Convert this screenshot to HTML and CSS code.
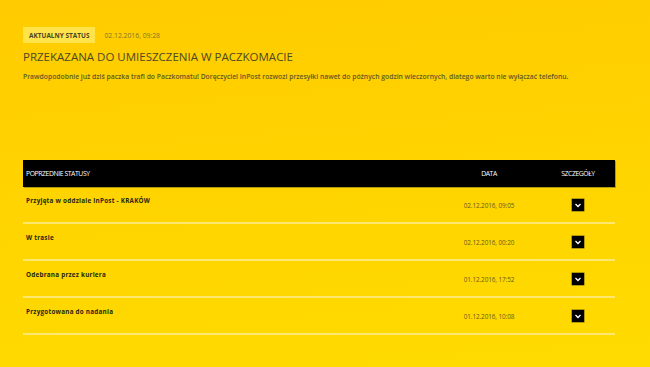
FILE: index.html
```html
<!DOCTYPE html>
<html lang="pl">
<head>
<meta charset="utf-8">
<link rel="stylesheet" href="styles.css">
</head>
<body>
<div class="page">
  <section class="current">
    <div class="status-line">
      <span class="badge">AKTUALNY STATUS</span>
      <span class="current-date">02.12.2016, 09:28</span>
    </div>
    <h1 class="title">PRZEKAZANA DO UMIESZCZENIA W PACZKOMACIE</h1>
    <p class="desc">Prawdopodobnie już dziś paczka trafi do Paczkomatu! Doręczyciel InPost rozwozi przesyłki nawet do późnych godzin wieczornych, dlatego warto nie wyłączać telefonu.</p>
  </section>

  <section class="history">
    <div class="head">
      <div class="col-name">POPRZEDNIE STATUSY</div>
      <div class="col-date">DATA</div>
      <div class="col-more">SZCZEGÓŁY</div>
    </div>
    <div class="row">
      <div class="col-name name">Przyjęta w oddziale InPost - KRAKÓW</div>
      <div class="col-date date">02.12.2016, 09:05</div>
      <div class="col-more"><span class="toggle"><svg viewBox="0 0 12 12" width="12" height="12"><path d="M3.5 5 L6 7.5 L8.5 5" fill="none" stroke="#fff" stroke-width="1.3"/></svg></span></div>
    </div>
    <div class="row">
      <div class="col-name name">W trasie</div>
      <div class="col-date date">02.12.2016, 00:20</div>
      <div class="col-more"><span class="toggle"><svg viewBox="0 0 12 12" width="12" height="12"><path d="M3.5 5 L6 7.5 L8.5 5" fill="none" stroke="#fff" stroke-width="1.3"/></svg></span></div>
    </div>
    <div class="row">
      <div class="col-name name">Odebrana przez kuriera</div>
      <div class="col-date date">01.12.2016, 17:52</div>
      <div class="col-more"><span class="toggle"><svg viewBox="0 0 12 12" width="12" height="12"><path d="M3.5 5 L6 7.5 L8.5 5" fill="none" stroke="#fff" stroke-width="1.3"/></svg></span></div>
    </div>
    <div class="row">
      <div class="col-name name">Przygotowana do nadania</div>
      <div class="col-date date">01.12.2016, 10:08</div>
      <div class="col-more"><span class="toggle"><svg viewBox="0 0 12 12" width="12" height="12"><path d="M3.5 5 L6 7.5 L8.5 5" fill="none" stroke="#fff" stroke-width="1.3"/></svg></span></div>
    </div>
  </section>
</div>
</body>
</html>
```

FILE: styles.css
```css
* { box-sizing: border-box; }
html, body { margin: 0; padding: 0; }
body {
  width: 650px;
  height: 367px;
  overflow: hidden;
  background: linear-gradient(175deg, #ffcb00 0%, #ffd400 50%, #ffdb00 100%);
  font-family: "Open Sans", "DejaVu Sans", sans-serif;
}
.page {
  padding: 27px 35px 0 23px;
}
.status-line {
  display: flex;
  align-items: center;
  gap: 9px;
}
.badge {
  display: flex;
  align-items: center;
  height: 16px;
  padding: 0 6px;
  background: #ffe34a;
  color: #4a4420;
  font-weight: 700;
  font-size: 6.4px;
  letter-spacing: 0.05px;
}
.current-date {
  font-size: 6.8px;
  color: #857530;
}
.title {
  margin: 7px 0 0;
  font-size: 11.5px;
  line-height: 14px;
  font-weight: 400;
  color: #4d4826;
}
.desc {
  margin: 8px 0 0;
  font-size: 6.8px;
  line-height: 9px;
  font-weight: 600;
  color: #635824;
}
.history {
  margin-top: 79px;
  width: 592px;
}
.head, .row {
  display: grid;
  grid-template-columns: 1fr 70px 74px;
  column-gap: 17px;
}
.head {
  height: 27px;
  align-items: center;
  background: #000;
  color: #fff;
  font-size: 6.8px;
  letter-spacing: -0.4px;
  box-shadow: 1px 1px 0 #b09a10;
}
.head .col-name { padding-left: 3px; }
.col-date, .col-more { text-align: center; }
.row {
  height: 37px;
  align-items: center;
  border-bottom: 2px solid #ffe870;
}
.name {
  align-self: start;
  padding: 10px 0 0 3px;
  font-size: 6.3px;
  line-height: 8px;
  font-weight: 700;
  color: #2a2610;
  letter-spacing: 0.25px;
}
.date {
  font-size: 6.4px;
  color: #6a5a22;
  letter-spacing: -0.1px;
  padding-top: 1px;
}
.col-more {
  display: flex;
  justify-content: center;
}
.toggle {
  display: flex;
  width: 12px;
  height: 12px;
  background: #000;
  box-shadow: 0 0 0 0.5px #6a5a10;
}
```
